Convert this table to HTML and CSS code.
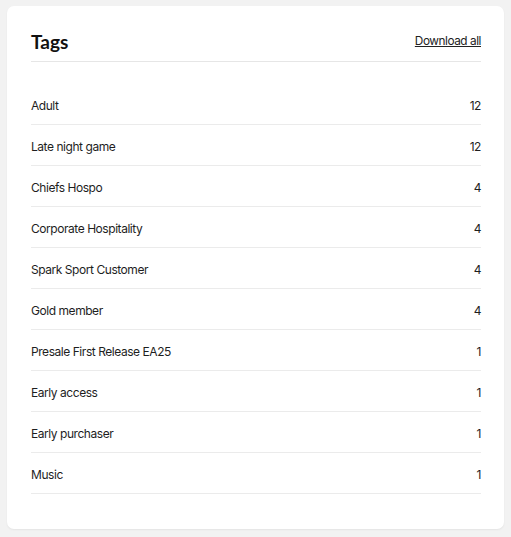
FILE: index.html
```html
<!DOCTYPE html>
<html>
<head>
<meta charset="utf-8">
<link rel="stylesheet" href="styles.css">
</head>
<body>
<div class="card">
  <div class="header">
    <h1 class="title">Tags</h1>
    <a class="download" href="#">Download all</a>
  </div>
  <ul class="list">
    <li class="row"><span>Adult</span><span>12</span></li>
    <li class="row"><span>Late night game</span><span>12</span></li>
    <li class="row"><span>Chiefs Hospo</span><span>4</span></li>
    <li class="row"><span>Corporate Hospitality</span><span>4</span></li>
    <li class="row"><span>Spark Sport Customer</span><span>4</span></li>
    <li class="row"><span>Gold member</span><span>4</span></li>
    <li class="row"><span>Presale First Release EA25</span><span>1</span></li>
    <li class="row"><span>Early access</span><span>1</span></li>
    <li class="row"><span>Early purchaser</span><span>1</span></li>
    <li class="row"><span>Music</span><span>1</span></li>
  </ul>
</div>
</body>
</html>
```
FILE: styles.css
```css
html, body {
  margin: 0;
  padding: 0;
  background: #f2f2f2;
}
body {
  padding: 6px 7px 9px 7px;
  font-family: Inter, "Noto Sans", sans-serif;
  color: #1f1f1f;
}
.card {
  background: #fff;
  border-radius: 7px;
  box-shadow: 0 1px 2px rgba(0,0,0,0.06);
  padding: 22px 23px 35px 24px;
}
.header {
  display: flex;
  justify-content: space-between;
  align-items: center;
  height: 33px;
  padding-bottom: 0;
  border-bottom: 1px solid #e6e6e6;
}
.title {
  margin: 0 0 7px 0;
  font-family: Lato, Inter, sans-serif;
  font-size: 19px;
  font-weight: 700;
  color: #111;
}
.download {
  margin-bottom: 7px;
  font-size: 11.8px;
  letter-spacing: -0.45px;
  color: #222;
  text-decoration: underline;
}
.list {
  list-style: none;
  margin: 22px 0 0 0;
  padding: 0;
}
.row {
  box-sizing: border-box;
  display: flex;
  justify-content: space-between;
  align-items: center;
  height: 41px;
  padding-top: 2px;
  border-bottom: 1px solid #ebebeb;
  font-size: 12px;
  letter-spacing: -0.45px;
  color: #1e1e1e;
}
```
